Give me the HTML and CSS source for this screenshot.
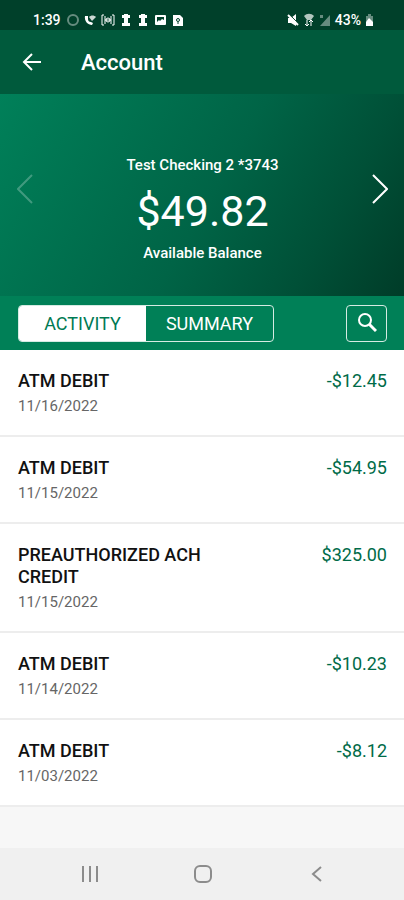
FILE: index.html
```html
<!DOCTYPE html>
<html lang="en">
<head>
  <meta charset="UTF-8">
  <meta name="viewport" content="width=device-width, initial-scale=1">
  <title>Account</title>
  <link rel="stylesheet" href="styles.css">
</head>
<body>

  <div class="status-bar">
    <div class="status-left">
      <span>1:39</span>
      <svg class="dim" width="13" height="14" viewBox="0 0 13 14"><circle cx="7" cy="7" r="5" fill="none" stroke="#fff" stroke-width="2"/></svg>
      <svg width="12" height="14" viewBox="0 0 12 14"><path d="M1 3h3v3c0 2 1 3 3 3l2 1-1 2C4 12 0 8 1 3z" fill="#fff"/><path d="M5 4c2-2 5-2 7 0L8 8z" fill="#fff" opacity=".8"/></svg>
      <svg width="14" height="14" viewBox="0 0 14 14" fill="none" stroke="#fff"><path d="M3 2H1v10h2M11 2h2v10h-2M4 3v8M10 3v8M4 7h6"/><circle cx="7" cy="7" r="2"/></svg>
      <svg class="pawn" width="10" height="14" viewBox="0 0 10 14"><path d="M3 1h4v1h2v3H7v5h2v3H1v-3h2V5H1V2h2z" fill="#fff"/></svg>
      <svg class="pawn" width="10" height="14" viewBox="0 0 10 14"><path d="M3 1h4v1h2v3H7v5h2v3H1v-3h2V5H1V2h2z" fill="#fff"/></svg>
      <svg width="13" height="14" viewBox="0 0 13 14"><rect x="1" y="2" width="11" height="10" rx="1" fill="#fff"/><path d="M3 9V4h7v3L8 6 6 8 5 7z" fill="#00402a"/></svg>
      <svg width="12" height="14" viewBox="0 0 12 14"><path d="M1 2h7l3 3v8H1z" fill="#fff"/><circle cx="6" cy="7" r="1.5" fill="none" stroke="#00402a"/><path d="M6 9v2" stroke="#00402a"/></svg>
    </div>
    <div class="status-right">
      <svg width="12" height="14" viewBox="0 0 12 14"><path d="M1 5h3l5-4v12L4 10H1z" fill="#fff"/><path d="M2 1l10 10" stroke="#00402a"/><path d="M1 2l10 10" stroke="#fff" stroke-width="2"/></svg>
      <svg width="12" height="14" viewBox="0 0 12 14"><path d="M1 3c3-3 7-3 10 0L8 7H4z" fill="#fff" opacity=".7"/><path d="M4 7v6M2 11l2 2 2-2M8 13V7M6 9l2-2 2 2" fill="none" stroke="#fff"/></svg>
      <svg class="dim" width="12" height="14" viewBox="0 0 12 14"><path d="M11 2v11H1zM1 2h3v3H1z" fill="#fff"/></svg>
      <span>43%</span>
      <svg width="9" height="14" viewBox="0 0 9 14"><path d="M3 1h3v2h2v10H1V3h2z" fill="#fff" opacity=".4"/><path d="M4 5l4 4v4H1V9z" fill="#fff"/></svg>
    </div>
  </div>

  <header class="app-bar">
    <button class="icon-button" aria-label="Back">
      <svg width="20" height="20" viewBox="0 0 20 20"><path d="M19 9H2M10 1L2 9l8 8" fill="none" stroke="#fff" stroke-width="2"/></svg>
    </button>
    <h1>Account</h1>
  </header>

  <main>
    <section class="balance-card">
      <button class="icon-button" aria-label="Previous account" disabled>
        <svg width="16" height="30" viewBox="0 0 16 30"><path d="M15 1L1 15l14 14" fill="none" stroke="#fff" stroke-width="2"/></svg>
      </button>
      <div class="balance">
        <p class="balance-label">Test Checking 2 *3743</p>
        <p class="balance-amount">$49.82</p>
        <p class="balance-label">Available Balance</p>
      </div>
      <button class="icon-button" aria-label="Next account">
        <svg width="16" height="30" viewBox="0 0 16 30"><path d="M1 1l14 14L1 29" fill="none" stroke="#fff" stroke-width="2"/></svg>
      </button>
    </section>

    <div class="toolbar">
      <div class="tabs">
        <button class="tab active">ACTIVITY</button>
        <button class="tab">SUMMARY</button>
      </div>
      <button class="search-button" aria-label="Search">
        <svg width="20" height="20" viewBox="0 0 20 20" fill="none" stroke="#fff"><circle cx="8" cy="7" r="6" stroke-width="2"/><path d="M12 11l7 7" stroke-width="3"/></svg>
      </button>
    </div>

    <ul class="transactions">
      <li class="transaction">
        <div class="details"><h2>ATM DEBIT</h2><p class="date">11/16/2022</p></div>
        <span class="amount">-$12.45</span>
      </li>
      <li class="transaction">
        <div class="details"><h2>ATM DEBIT</h2><p class="date">11/15/2022</p></div>
        <span class="amount">-$54.95</span>
      </li>
      <li class="transaction">
        <div class="details"><h2>PREAUTHORIZED ACH CREDIT</h2><p class="date">11/15/2022</p></div>
        <span class="amount">$325.00</span>
      </li>
      <li class="transaction">
        <div class="details"><h2>ATM DEBIT</h2><p class="date">11/14/2022</p></div>
        <span class="amount">-$10.23</span>
      </li>
      <li class="transaction">
        <div class="details"><h2>ATM DEBIT</h2><p class="date">11/03/2022</p></div>
        <span class="amount">-$8.12</span>
      </li>
    </ul>
  </main>

  <nav class="system-nav">
    <button class="icon-button" aria-label="Recent apps">
      <svg width="20" height="20" viewBox="0 0 20 20"><path d="M3 2v16M10 2v16M17 2v16" stroke="#8c8c8c" stroke-width="2"/></svg>
    </button>
    <button class="icon-button" aria-label="Home">
      <svg width="20" height="20" viewBox="0 0 20 20"><rect x="2" y="2" width="16" height="16" rx="5" fill="none" stroke="#8c8c8c" stroke-width="2"/></svg>
    </button>
    <button class="icon-button" aria-label="Back">
      <svg width="20" height="20" viewBox="0 0 20 20"><path d="M15 3l-8 7 8 7" fill="none" stroke="#8c8c8c" stroke-width="2"/></svg>
    </button>
  </nav>

</body>
</html>
```
FILE: styles.css
```css
* { box-sizing: border-box; }
body {
  display: flex;
  flex-direction: column;
  min-height: 100vh;
  margin: 0;
  background: #f7f7f7;
  color: #111;
  font-family: Roboto, "Liberation Sans", sans-serif;
}
h1, h2, p, ul { margin: 0; padding: 0; }
button { margin: 0; border: 0; background: none; color: inherit; font: inherit; cursor: pointer; }
svg { display: block; }
main { flex: 1; }
.icon-button { padding: 0; }
.icon-button:disabled { opacity: 0.25; }
.dim { opacity: 0.4; }

.status-bar {
  display: flex;
  justify-content: space-between;
  height: 30px;
  padding: 9px 30px 0 33px;
  background: #00402a;
  color: #fff;
  font-size: 14px;
  font-weight: 500;
  line-height: 22px;
}
.status-left, .status-right { display: flex; align-items: center; gap: 5px; }
.status-right { gap: 4px; }
.pawn { margin: 0 1px; }

.app-bar {
  display: flex;
  align-items: center;
  gap: 39px;
  height: 64px;
  padding: 2px 22px 0;
  background: #005a3c;
  color: #fff;
}
.app-bar h1 { font-size: 22px; font-weight: 500; line-height: 28px; }

.balance-card {
  display: flex;
  align-items: center;
  justify-content: space-between;
  height: 202px;
  padding: 0 16px 12px 17px;
  background: linear-gradient(120deg, #008059 0%, #006446 52%, #005037 78%, #003c28 100%);
  color: #fff;
  text-align: center;
}
.balance { padding-top: 40px; }
.balance-label { font-size: 15px; font-weight: 500; line-height: 20px; }
.balance-amount { padding: 12px 0 8px; font-size: 43px; line-height: 48px; }

.toolbar {
  display: flex;
  align-items: center;
  justify-content: space-between;
  height: 54px;
  padding: 0 17px 0 18px;
  background: #008057;
  color: #fff;
}
.tabs { display: flex; overflow: hidden; border: 1px solid #d5ebe3; border-radius: 4px; }
.tab { width: 127px; padding: 0; font-size: 18px; line-height: 35px; }
.tab.active { background: #fff; color: #007a53; }
.search-button { padding: 7px 9px 8px 10px; border: 1px solid #d5ebe3; border-radius: 4px; }

.transactions { list-style: none; }
.transaction {
  display: flex;
  justify-content: space-between;
  padding: 20px 17px 19px 18px;
  border-bottom: 2px solid #ededed;
  background: #fff;
}
.details { max-width: 210px; }
.transaction h2 { font-size: 18px; font-weight: 500; line-height: 22px; }
.date { padding-top: 4px; color: #666; font-size: 15px; line-height: 20px; }
.amount { color: #006b48; font-size: 18px; line-height: 22px; }

.system-nav {
  display: flex;
  align-items: center;
  justify-content: center;
  gap: 93px;
  height: 52px;
  padding-left: 2px;
  background: #f0f0f0;
}
```
